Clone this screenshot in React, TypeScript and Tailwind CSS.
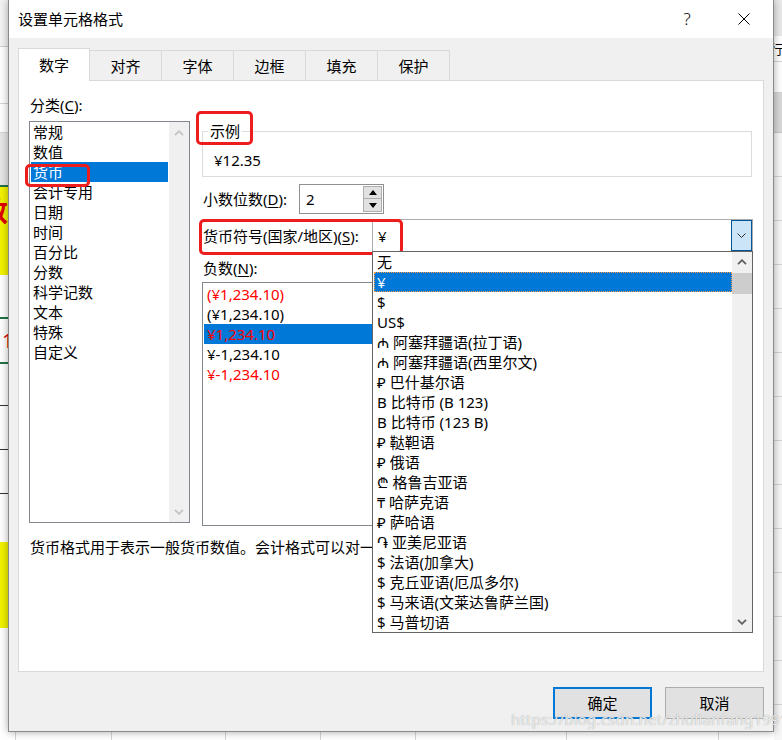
import React from 'react';

const categories = ['常规', '数值', '货币', '会计专用', '日期', '时间', '百分比', '分数', '科学记数', '文本', '特殊', '自定义'];

const negatives = [
  { text: '(¥1,234.10)', red: true, selected: false },
  { text: '(¥1,234.10)', red: false, selected: false },
  { text: '¥1,234.10', red: true, selected: true },
  { text: '¥-1,234.10', red: false, selected: false },
  { text: '¥-1,234.10', red: true, selected: false },
];

const symbols = [
  '无', '¥', '$', 'US$',
  '₼ 阿塞拜疆语(拉丁语)', '₼ 阿塞拜疆语(西里尔文)', '₽ 巴什基尔语',
  'B 比特币 (B 123)', 'B 比特币 (123 B)', '₽ 鞑靼语', '₽ 俄语',
  '₾ 格鲁吉亚语', '₸ 哈萨克语', '₽ 萨哈语', '֏ 亚美尼亚语',
  '$ 法语(加拿大)', '$ 克丘亚语(厄瓜多尔)', '$ 马来语(文莱达鲁萨兰国)', '$ 马普切语',
];

const tabs = ['数字', '对齐', '字体', '边框', '填充', '保护'];

function Chevron({ up, className }: { up?: boolean; className: string }) {
  return (
    <svg width="10" height="6" viewBox="0 0 10 6" className={className}>
      <polyline
        points={up ? '1,5.2 5,1.2 9,5.2' : '1,0.8 5,4.8 9,0.8'}
        fill="none"
        stroke="currentColor"
        strokeWidth="1.8"
      />
    </svg>
  );
}

function Annot({ className }: { className: string }) {
  return <div className={`absolute border-[3px] border-[#ee1d1d] rounded-[5px] ${className}`} />;
}

function LeftStrip() {
  return (
    <div className="w-[8px] flex flex-col overflow-hidden">
      <div className="h-[47px] shrink-0 bg-[#f3f3f3] border-b border-[#d0d0d0]" />
      <div className="h-[57px] shrink-0 bg-white border-b border-[#d4d4d4]" />
      <div className="h-[29px] shrink-0 bg-white border-b border-[#d4d4d4]" />
      <div className="h-[54px] shrink-0 bg-[#e6e6e6] border-b-2 border-[#217346]" />
      <div className="h-[88px] shrink-0 bg-[#f2f200] overflow-hidden flex items-start pt-[8px]">
        <span className="-ml-[20px] text-[28px] leading-[32px] font-bold text-[#e00000]">数</span>
      </div>
      <div className="h-[44px] shrink-0 bg-white border-b-2 border-[#217346]" />
      <div className="h-[45px] shrink-0 bg-white border-b-2 border-[#217346] overflow-hidden flex items-center">
        <span className="ml-[2px] text-[20px] text-[#e00000]">1</span>
      </div>
      <div className="h-[42px] shrink-0 bg-white border-b border-[#333]" />
      <div className="h-[44px] shrink-0 bg-white border-b border-[#333]" />
      <div className="h-[44px] shrink-0 bg-white border-b border-[#333]" />
      <div className="h-[48px] shrink-0 bg-white" />
      <div className="h-[86px] shrink-0 bg-[#f2f200]" />
      <div className="flex-1 bg-white" />
    </div>
  );
}

function RightStrip() {
  const rows = [177, 221, 265, 309, 353, 397, 441, 485, 529, 573, 617, 661, 705];
  return (
    <div className="w-[8px] flex flex-col overflow-hidden bg-[#f7f7f7]">
      <div className="h-[36px] shrink-0 bg-[#e9e9e9]" />
      <div className="h-[26px] shrink-0 bg-white border-b border-[#d4d4d4] overflow-hidden text-[13px] leading-[26px]">
        <span className="-ml-[4px]">行</span>
      </div>
      <div className="h-[31px] shrink-0 bg-white border-b border-[#d4d4d4]" />
      <div className="h-[40px] shrink-0 bg-[#d9d9d9] border-b border-[#c8c8c8]" />
      {rows.map((r) => (
        <div key={r} className="h-[44px] shrink-0 border-b border-[#d4d4d4]" />
      ))}
      <div className="flex-1" />
    </div>
  );
}

function BottomStrip() {
  const widths = ['w-[8px]', 'w-[96px]', 'w-[114px]', 'w-[95px]', 'w-[95px]', 'w-[151px]', 'w-[152px]'];
  return (
    <div className="h-[8px] flex bg-white">
      {widths.map((w, i) => (
        <div key={i} className={`${w} shrink-0 border-r border-[#d4d4d4]`} />
      ))}
      <div className="flex-1" />
    </div>
  );
}

export default function App() {
  return (
    <div className="relative w-[782px] h-[740px] overflow-hidden bg-white text-black text-[15px] leading-[20px] [font-family:'Noto_Sans','Noto_Sans_CJK_SC',sans-serif]">
      {/* spreadsheet behind the dialog */}
      <div className="flex h-full">
        <LeftStrip />
        <div className="flex-1 flex flex-col">
          <div className="flex-1" />
          <BottomStrip />
        </div>
        <RightStrip />
      </div>

      {/* dialog */}
      <div className="absolute left-[8px] top-0 w-[766px] h-[732px] bg-[#f0f0f0] border border-t-0 border-[#8a8a8a] shadow-[0_0_8px_rgba(0,0,0,0.35)] flex flex-col">
        <div className="h-[38px] shrink-0 bg-white flex items-center pl-[9px] pr-[19px]">
          <span>设置单元格格式</span>
          <div className="ml-auto flex items-center gap-[37px]">
            <span className="w-[20px] text-center text-[17px] font-light">?</span>
            <div className="w-[20px] flex justify-center">
              <svg width="12" height="12" viewBox="0 0 12 12">
                <path d="M0.5 0.5 L11.5 11.5 M11.5 0.5 L0.5 11.5" stroke="#000" strokeWidth="1" />
              </svg>
            </div>
          </div>
        </div>

        <div className="flex-1 flex flex-col pl-[9px] pt-[10px]">
          <div className="flex items-start h-[32px]">
            {tabs.map((t, i) =>
              i === 0 ? (
                <div key={t} className="relative z-10 w-[72px] h-[33px] bg-white border border-b-0 border-[#d9d9d9] flex items-center justify-center pb-px">
                  {t}
                </div>
              ) : (
                <div key={t} className="mt-[2px] w-[72px] h-[30px] border border-l-0 border-b-0 border-[#d9d9d9] flex items-center justify-center">
                  {t}
                </div>
              )
            )}
          </div>

          <div className="w-[746px] h-[592px] bg-white border border-[#d9d9d9] pl-[10px] pt-[14px]">
            <div className="flex gap-[12px] items-start">
              {/* left column */}
              <div className="w-[161px] shrink-0">
                <div className="pl-px">
                  分类(<u className="underline-offset-2">C</u>):
                </div>
                <div className="mt-[6px] h-[402px] border border-[#828790] bg-white flex">
                  <div className="flex-1 pl-px">
                    {categories.map((c) => (
                      <div
                        key={c}
                        className={`h-[20px] pl-[2px] ${c === '货币' ? 'bg-[#0078d7] text-white' : ''}`}
                      >
                        {c}
                      </div>
                    ))}
                  </div>
                  <div className="w-[20px] ml-px bg-[#f0f0f0] flex flex-col justify-between">
                    <div className="h-[21px] flex items-center justify-center">
                      <Chevron up className="text-[#c4c4c4]" />
                    </div>
                    <div className="h-[20px] flex items-center justify-center">
                      <Chevron className="text-[#c4c4c4]" />
                    </div>
                  </div>
                </div>
              </div>

              {/* right column */}
              <div className="w-[551px] pt-[26px]">
                <fieldset className="w-[550px] border border-[#dcdcdc] px-[5px]">
                  <legend className="px-[2px]">示例</legend>
                  <div className="pl-[6px] pt-[9px] pb-[6px]">¥12.35</div>
                </fieldset>

                <div className="mt-[7px] flex items-center h-[30px]">
                  <div className="w-[97px] pl-px">
                    小数位数(<u className="underline-offset-2">D</u>):
                  </div>
                  <div className="w-[85px] h-[30px] border border-[#8f8f8f] bg-white flex items-center">
                    <span className="pl-[6px] flex-1">2</span>
                    <div className="flex flex-col pr-px">
                      <div className="w-[19px] h-[13px] bg-[#e1e1e1] border border-[#adadad] flex items-center justify-center">
                        <svg width="8" height="5" viewBox="0 0 8 5"><path d="M0 5 L4 0 L8 5 Z" fill="#000" /></svg>
                      </div>
                      <div className="w-[19px] h-[13px] bg-[#e1e1e1] border border-t-0 border-[#adadad] flex items-center justify-center">
                        <svg width="8" height="5" viewBox="0 0 8 5"><path d="M0 0 L4 5 L8 0 Z" fill="#000" /></svg>
                      </div>
                    </div>
                  </div>
                </div>

                <div className="mt-[5px] flex items-center h-[33px]">
                  <div className="w-[170px] pl-px">
                    货币符号(国家/地区)(<u className="underline-offset-2">S</u>):
                  </div>
                  <div className="relative w-[381px] h-[33px] border border-[#ababab] bg-white flex items-center">
                    <span className="pl-[5px] flex-1">¥</span>
                    <div className="w-[21px] h-[31px] bg-[#cce4f7] border border-[#005499] flex items-center justify-center">
                      <svg width="9" height="5" viewBox="0 0 9 5">
                        <polyline points="0.5,0.5 4.5,4.5 8.5,0.5" fill="none" stroke="#333" strokeWidth="1" />
                      </svg>
                    </div>

                    {/* open dropdown */}
                    <div className="absolute -left-px top-[31px] z-20 w-[381px] h-[382px] bg-white border border-[#646464] flex">
                      <div className="flex-1 pl-px">
                        {symbols.map((s, i) => (
                          <div
                            key={i}
                            className={`h-[20px] pl-[3px] whitespace-nowrap ${
                              i === 1 ? 'bg-[#0078d7] text-white outline outline-1 outline-dotted outline-[#ff9d3c] -outline-offset-1' : ''
                            }`}
                          >
                            {s}
                          </div>
                        ))}
                      </div>
                      <div className="w-[20px] bg-[#f0f0f0] flex flex-col">
                        <div className="h-[20px] flex items-center justify-center">
                          <Chevron up className="text-[#606060]" />
                        </div>
                        <div className="mt-px h-[21px] bg-[#cdcdcd]" />
                        <div className="flex-1" />
                        <div className="h-[20px] flex items-center justify-center">
                          <Chevron className="text-[#606060]" />
                        </div>
                      </div>
                    </div>
                  </div>
                </div>

                <div className="mt-[6px] pl-px">
                  负数(<u className="underline-offset-2">N</u>):
                </div>
                <div className="mt-[4px] w-[550px] h-[244px] border border-[#828790] bg-white pl-px pt-px">
                  {negatives.map((n, i) => (
                    <div
                      key={i}
                      className={`h-[20px] pl-[3px] ${n.selected ? 'bg-[#0078d7]' : ''} ${
                        n.red ? 'text-[#ff0000]' : 'text-black'
                      }`}
                    >
                      {n.text}
                    </div>
                  ))}
                </div>
              </div>
            </div>

            {/* the rest of this line lies under the open dropdown */}
            <div className="mt-[11px] pl-px w-[343px] overflow-hidden whitespace-nowrap">
              货币格式用于表示一般货币数值。会计格式可以对一列数值进行小数点对齐。
            </div>
          </div>

          <div className="mt-[15px] w-[746px] flex justify-end gap-[13px]">
            <button className="w-[99px] h-[32px] bg-[#e1e1e1] border-2 border-[#0078d7]">确定</button>
            <button className="w-[99px] h-[32px] bg-[#e1e1e1] border border-[#adadad]">取消</button>
          </div>
        </div>
      </div>

      {/* red annotation marks */}
      <Annot className="left-[25px] top-[164px] w-[65px] h-[23px]" />
      <Annot className="left-[196px] top-[111px] w-[57px] h-[34px]" />
      <Annot className="left-[199px] top-[219px] w-[204px] h-[36px]" />

      {/* watermark */}
      <div className="absolute left-[511px] top-[709px] text-[15px] text-white/80 tracking-[0.2px] [text-shadow:0_0_1px_#8a8a8a]">
        https://blog.csdn.net/zhulianfang1991
      </div>
    </div>
  );
}
